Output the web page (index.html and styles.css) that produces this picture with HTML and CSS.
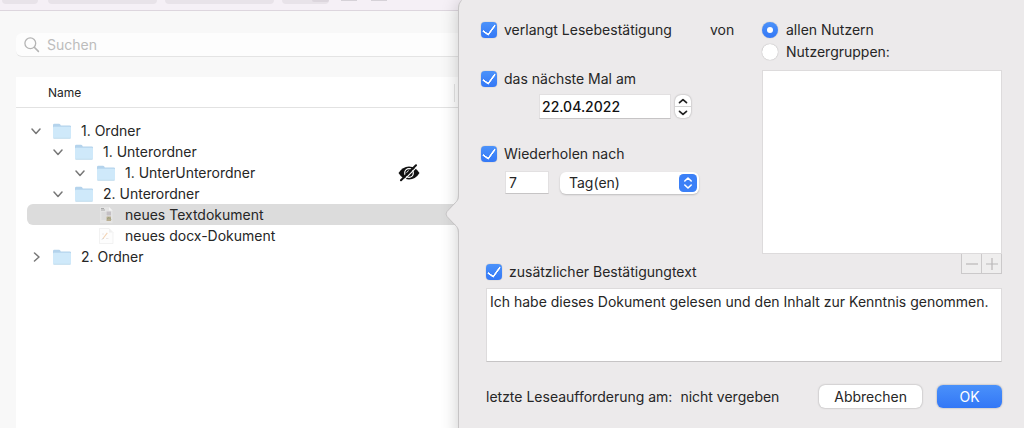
FILE: index.html
```html
<!DOCTYPE html>
<html lang="de">
<head>
<meta charset="utf-8">
<meta name="viewport" content="width=device-width, initial-scale=1">
<title>Lesebestätigung</title>
<link rel="stylesheet" href="styles.css">
</head>
<body>
<svg class="defs" aria-hidden="true">
  <symbol id="folder" viewBox="0 0 18 16">
    <path d="M0 2.2Q0 .8 1.3.8H6Q6.8.8 7.3 1.6L7.8 2.4H16.8Q18 2.4 18 3.6V8H0Z" fill="#b4d3ec"/>
    <rect y="3.8" width="18" height="11.8" rx="1" fill="#cfe9fa"/>
    <path d="M.5 15.3H17.5" stroke="#b9d6e8" stroke-width=".7"/>
  </symbol>
  <symbol id="down" viewBox="0 0 10 10"><path d="M1 3 5 7.4 9 3" fill="none" stroke="#777" stroke-width="1.5" stroke-linecap="round" stroke-linejoin="round"/></symbol>
  <symbol id="right" viewBox="0 0 10 10"><path d="M3.5 1 8 5 3.5 9" fill="none" stroke="#777" stroke-width="1.5" stroke-linecap="round" stroke-linejoin="round"/></symbol>
</svg>

<main class="window">
  <header class="toolbar">
    <span class="tool tool-small"></span>
    <span class="tool tool-large"></span>
    <span class="tool tool-large"></span>
    <span class="tool tool-toggle"><span class="tool-active"></span></span>
    <span class="tool-mark"></span>
    <span class="tool-mark"></span>
  </header>

  <section class="browser">
    <label class="search">
      <svg class="search-icon" viewBox="0 0 16 16" aria-hidden="true"><circle cx="6.3" cy="6.3" r="5.400" fill="none" stroke="#b4b4b4" stroke-width="1.3"/><path d="M10.3 10.3 14.4 14.4" stroke="#b4b4b4" stroke-width="1.6" stroke-linecap="round"/></svg>
      <input class="search-input" type="search" placeholder="Suchen" aria-label="Suchen">
    </label>

    <div class="files">
      <div class="files-head"><span>Name</span></div>
      <ul class="tree">
        <li class="row"><svg class="arrow"><use href="#down"/></svg><svg class="icon"><use href="#folder"/></svg><span>1. Ordner</span></li>
        <li class="row level-1"><svg class="arrow"><use href="#down"/></svg><svg class="icon"><use href="#folder"/></svg><span>1. Unterordner</span></li>
        <li class="row level-2"><svg class="arrow"><use href="#down"/></svg><svg class="icon"><use href="#folder"/></svg><span>1. UnterUnterordner</span>
          <svg class="hidden-icon" viewBox="0 0 22 18" role="img" aria-label="ausgeblendet">
            <path d="M.5 9Q4.5 2.500 11 2.500T21.5 9Q17.500 15.500 11 15.500T.5 9Z" fill="#111"/>
            <circle cx="11" cy="9" r="4.300" fill="none" stroke="#fff" stroke-width="1.200"/>
            <path d="M11 6.800Q9 7 8.800 9" fill="none" stroke="#fff" stroke-width="1"/>
            <path d="M4.500 17.400 19.400 2.400" stroke="#fff" stroke-width="1.300"/>
            <path d="M3 16.300 18 1.300" stroke="#111" stroke-width="2" stroke-linecap="round"/>
          </svg>
        </li>
        <li class="row level-1"><svg class="arrow"><use href="#down"/></svg><svg class="icon"><use href="#folder"/></svg><span>2. Unterordner</span></li>
        <li class="row level-2 selected"><span class="arrow"></span>
          <svg class="icon" viewBox="0 0 18 16" aria-hidden="true"><path d="M3 0H12L15.500 3.500V16H3Z" fill="#e4e4e4"/><path d="M12 0V3.500H15.500Z" fill="#f4f4f4"/><path d="M4 1.500H7M4 3H8" stroke="#9a9a9a" stroke-width=".8"/><path d="M4.500 6H9M4.500 8H9M4.500 10H9M4.500 12H9" stroke="#cfcfcf" stroke-width=".7"/><path d="M9.500 4.500H14V8.500H9.500Z" fill="#c4c0c4"/><path d="M9.500 9.500H14V14H9.500Z" fill="#b9ad91"/><path d="M10 12.200 12 10.500 14 12.500" fill="none" stroke="#8a9a76" stroke-width=".8"/></svg>
          <span>neues Textdokument</span></li>
        <li class="row level-2"><span class="arrow"></span>
          <svg class="icon" viewBox="0 0 18 16" aria-hidden="true"><path d="M2.500.5H12L16 4.500V15.500H2.500Z" fill="#fdfdfd" stroke="#ededed" stroke-width=".7"/><path d="M12 .5V4.500H16Z" fill="#f0f0f0"/><path d="M6 10.500 10.300 4.800" stroke="#f3d3b4" stroke-width="1.100"/><path d="M5.200 11.400 6.200 10.300" stroke="#aaa" stroke-width=".8"/><path d="M5 6H7M9 10.500H11.500" stroke="#e7e2e2" stroke-width=".8"/></svg>
          <span>neues docx-Dokument</span></li>
        <li class="row"><svg class="arrow"><use href="#right"/></svg><svg class="icon"><use href="#folder"/></svg><span>2. Ordner</span></li>
      </ul>
    </div>
  </section>

  <form class="popover">
    <svg class="pointer" viewBox="0 0 15 44" aria-hidden="true"><path d="M14 1C14 8 12.500 9.500 9.500 12L2 19.500Q0 22 2 24.500L9.500 32C12.500 34.500 14 36 14 43H15V1Z" fill="#eceaeb"/><path d="M13.500 1C13.500 8 12 9.500 9 12L2 19.500Q0 22 2 24.500L9 32C12 34.500 13.500 36 13.500 43" fill="none" stroke="#c6c4c5"/></svg>

    <div class="options">
      <div class="schedule">
        <div class="line">
          <label class="choice"><input class="check" type="checkbox" checked>verlangt Lesebestätigung</label>
          <span class="from">von</span>
        </div>
        <div class="group">
          <label class="choice"><input class="check" type="checkbox" checked>das nächste Mal am</label>
          <div class="date-line">
            <input class="field date" type="text" value="22.04.2022" aria-label="Datum">
            <span class="stepper">
              <button class="step" type="button" aria-label="später"><svg viewBox="0 0 10 6"><path d="M1.500 4.700 5 1.600 8.500 4.700"/></svg></button>
              <button class="step" type="button" aria-label="früher"><svg viewBox="0 0 10 6"><path d="M1.500 1.300 5 4.400 8.500 1.300"/></svg></button>
            </span>
          </div>
        </div>
        <div class="group">
          <label class="choice"><input class="check" type="checkbox" checked>Wiederholen nach</label>
          <div class="repeat-line">
            <input class="field count" type="text" value="7" aria-label="Anzahl">
            <span class="select-wrap">
              <select class="select" aria-label="Einheit"><option>Tag(en)</option></select>
              <svg class="select-icon" viewBox="0 0 18 18" aria-hidden="true"><rect width="18" height="18" rx="4.500" fill="#3b80f7"/><path d="M5.800 7 9 4 12.200 7M5.800 11 9 14 12.200 11" fill="none" stroke="#fff" stroke-width="1.600" stroke-linecap="round" stroke-linejoin="round"/></svg>
            </span>
          </div>
        </div>
      </div>

      <div class="users">
        <label class="choice"><input class="radio" type="radio" name="users" checked>allen Nutzern</label>
        <label class="choice"><input class="radio" type="radio" name="users">Nutzergruppen:</label>
        <div class="group-list"></div>
        <div class="list-tools">
          <button class="list-tool" type="button" aria-label="Entfernen" disabled><svg viewBox="0 0 14 14"><path d="M1 7H13"/></svg></button>
          <button class="list-tool" type="button" aria-label="Hinzufügen" disabled><svg viewBox="0 0 14 14"><path d="M1 7H13M7 1V13"/></svg></button>
        </div>
      </div>
    </div>

    <div class="note">
      <label class="choice"><input class="check" type="checkbox" checked>zusätzlicher Bestätigungtext</label>
      <textarea class="note-text" aria-label="Bestätigungstext">Ich habe dieses Dokument gelesen und den Inhalt zur Kenntnis genommen.</textarea>
    </div>

    <footer class="footer">
      <span>letzte Leseaufforderung am:</span>
      <span>nicht vergeben</span>
      <span class="actions">
        <button class="button" type="button">Abbrechen</button>
        <button class="button primary" type="submit">OK</button>
      </span>
    </footer>
  </form>
</main>
</body>
</html>
```
FILE: styles.css
```css
* { box-sizing: border-box; }

body {
  margin: 0;
  font: 14px/20px Inter, "Liberation Sans", sans-serif;
  color: #262626;
  background: #f8f8f8;
}

input, button, select, textarea { font: inherit; color: inherit; margin: 0; }
svg { display: block; }
.defs { position: absolute; width: 0; height: 0; }

.window {
  position: relative;
  display: flex;
  flex-direction: column;
  min-height: 100vh;
  overflow: hidden;
}

.toolbar {
  display: flex;
  gap: 10px;
  height: 11px;
  padding-left: 2px;
  background: #f5f0f6;
  border-bottom: 1px solid #ddd6de;
}
.tool { height: 4px; background: #e8e3e9; border-radius: 0 0 5px 5px; }
.tool-small { width: 36px; }
.tool-large { width: 109px; }
.tool-toggle { display: flex; justify-content: flex-end; width: 47px; }
.tool-large + .tool-large { margin: 0 -2px; }
.tool-active { width: 17px; height: 2px; background: #dcd6dd; border-radius: 0 0 4px 4px; }
.tool-mark { width: 16px; height: 1px; margin: 0 2px; background: #d6d2d8; }

.browser {
  flex: 1;
  display: flex;
  flex-direction: column;
  gap: 20px;
  padding: 22px 0 0 16px;
}
.search {
  display: flex;
  align-items: center;
  gap: 7px;
  height: 24px;
  padding-left: 8px;
  background: #fdfdfd;
  border-bottom: 1px solid #e4e4e4;
  border-radius: 6px;
}
.search-icon { width: 16px; height: 16px; }
.search-input {
  flex: 1;
  padding: 0;
  border: 0;
  outline: 0;
  background: none;
}
.search-input::placeholder { color: #bcbcbc; }

.files { flex: 1; background: #fff; }
.files-head {
  height: 31px;
  padding: 0 0 0 32px;
  font-size: 12px;
  line-height: 31px;
  border-bottom: 1px solid #e2e2e2;
}
.files-head span {
  display: block;
  width: 407px;
  background: linear-gradient(#e4e4e4, #e4e4e4) right center / 1px 18px no-repeat;
}
.tree { margin: 0; padding: 12px 0 0 11px; list-style: none; }
.row {
  display: flex;
  align-items: center;
  height: 21px;
  padding-left: 4px;
}
.level-1 { padding-left: 26px; }
.level-2 { padding-left: 48px; }
.selected { background: #dcdcdc; border-radius: 6px; }
.arrow { width: 10px; height: 10px; margin-right: 12px; }
.icon { width: 18px; height: 16px; margin-right: 10px; }
.hidden-icon { width: 22px; height: 18px; margin-left: 143px; }

.popover {
  position: absolute;
  top: -3px;
  right: 0;
  bottom: -12px;
  left: 458px;
  display: flex;
  flex-direction: column;
  padding: 23px 22px 0;
  background: #eceaeb;
  border-left: 1px solid #c6c4c5;
  border-radius: 11px 0 0 0;
  box-shadow: 0 3px 18px rgba(0, 0, 0, 0.2);
}
.pointer {
  position: absolute;
  top: 195px;
  left: -14px;
  width: 15px;
  height: 44px;
}

.options { display: grid; grid-template-columns: 1fr 240px; gap: 50px; }
.schedule { display: flex; flex-direction: column; gap: 29px; }
.line { display: flex; justify-content: space-between; }
.choice { display: flex; align-items: center; gap: 7px; height: 20px; }
.from { width: 42px; margin-right: -40px; }
.schedule .group + .group { margin-top: -4px; }

.check, .radio {
  appearance: none;
  display: grid;
  place-items: center;
  flex: none;
  width: 16px;
  height: 16px;
  border-radius: 4px;
  background: #fff;
  box-shadow: 0 0 1px rgba(0, 0, 0, 0.4);
}
.check:checked, .radio:checked { background: linear-gradient(#4b92fa, #3478f6); }
.check:checked::after {
  content: "";
  width: 6px;
  height: 11px;
  margin-bottom: 3px;
  border: solid #fff;
  border-width: 0 2px 2px 0;
  border-radius: 1px;
  transform: rotate(36deg);
}
.radio { border-radius: 50%; }
.radio:checked::after {
  content: "";
  width: 6px;
  height: 6px;
  border-radius: 50%;
  background: #fff;
}

.field {
  background: #fff;
  border: 1px solid #e2e0e1;
  border-bottom-color: #c6c4c5;
  border-radius: 0;
  padding: 0 2px;
}
.date-line { display: flex; align-items: center; gap: 4px; padding: 5px 0 0 58px; }
.date { width: 132px; height: 25px; font-weight: 500; color: #111; }
.stepper {
  display: flex;
  flex-direction: column;
  width: 16px;
  height: 23px;
  border-radius: 6px;
  background: #fff;
  box-shadow: 0 0 2px rgba(0, 0, 0, 0.35);
}
.step {
  flex: 1;
  display: grid;
  place-items: center;
  padding: 0;
  border: 0;
  background: none;
}
.step + .step { border-top: 1px solid #d4d4d4; }
.step svg { width: 10px; height: 6px; }
.step path { fill: none; stroke: #222; stroke-width: 1.7; stroke-linecap: round; stroke-linejoin: round; }

.repeat-line { display: flex; align-items: center; gap: 11px; padding: 7px 0 0 24px; }
.count { width: 44px; height: 23px; padding: 0 3px; }
.select-wrap { display: grid; align-items: center; width: 139px; }
.select {
  grid-area: 1 / 1;
  appearance: none;
  height: 22px;
  padding: 0 24px 0 9px;
  border: 0;
  border-radius: 6px;
  background: #fff;
  box-shadow: 0 1px 2px rgba(0, 0, 0, 0.2);
}
.select-icon {
  grid-area: 1 / 1;
  justify-self: end;
  width: 18px;
  height: 18px;
  margin-right: 2px;
  pointer-events: none;
}

.users { display: flex; flex-direction: column; }
.users .choice { gap: 8px; }
.users .choice + .choice { margin-top: 2px; }
.group-list { height: 184px; margin-top: 8px; background: #fff; border: 1px solid #dddbdc; }
.list-tools { display: flex; justify-content: flex-end; }
.list-tool {
  display: grid;
  place-items: center;
  width: 21px;
  height: 20px;
  padding: 0;
  border: 1px solid #cbc9ca;
  border-top: 0;
  background: #efeeee;
}
.list-tool + .list-tool { margin-left: -1px; }
.list-tool svg { width: 14px; height: 14px; }
.list-tool path { stroke: #b9b7b8; stroke-width: 1.2; }

.note { display: flex; flex-direction: column; gap: 6px; margin-top: -12px; padding-left: 5px; }
.note .choice { align-self: flex-start; }
.note-text {
  height: 74px;
  padding: 3px;
  border: 1px solid #dddbdc;
  border-bottom-color: #c6c4c5;
  outline: 0;
  background: #fff;
  resize: none;
  overflow: hidden;
}

.footer {
  display: flex;
  align-items: center;
  gap: 8px;
  margin-top: 23px;
  padding-left: 5px;
}
.actions { display: flex; gap: 15px; margin-left: auto; }
.button {
  min-width: 65px;
  height: 23px;
  padding: 0 15px;
  border: 0;
  border-radius: 6px;
  background: #fff;
  box-shadow: 0 0 2px rgba(0, 0, 0, 0.35);
}
.primary { color: #fff; background: linear-gradient(#4a91fa, #3377f6); }
```
